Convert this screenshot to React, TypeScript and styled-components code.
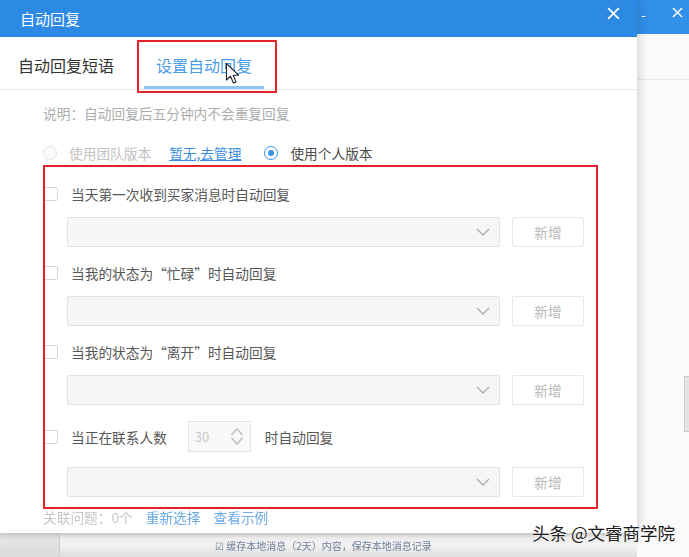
import React from "react";
import styled, { createGlobalStyle } from "styled-components";

const GlobalStyle = createGlobalStyle`
  html, body {
    margin: 0;
    padding: 0;
    background: #f2f2f2;
  }
  body {
    font-family: "Noto Sans CJK SC", "Noto Sans", sans-serif;
  }
  * {
    box-sizing: border-box;
  }
`;

const Screen = styled.div`
  position: relative;
  width: 689px;
  height: 557px;
  overflow: hidden;
  display: grid;
  grid-template-columns: 637px 1fr;
  grid-template-rows: 533px 1fr;
`;

const Dialog = styled.div`
  grid-column: 1;
  grid-row: 1;
  position: relative;
  z-index: 1;
  display: flex;
  flex-direction: column;
  background: #fff;
  box-shadow: 3px 0 9px rgba(0, 0, 0, 0.14);
`;

const TitleBar = styled.div`
  height: 37px;
  flex-shrink: 0;
  display: flex;
  align-items: center;
  justify-content: space-between;
  padding: 0 17px 0 20px;
  background: #2c8ae5;
`;

const Title = styled.div`
  color: #fff;
  font-size: 15px;
  line-height: 20px;
`;

const IconButton = styled.div`
  display: flex;
  align-items: center;
  justify-content: center;
  width: 14px;
  height: 14px;
  margin-top: -10px;
`;

const TabBar = styled.div`
  height: 53px;
  flex-shrink: 0;
  display: flex;
  gap: 20px;
  padding-left: 8px;
  border-bottom: 1px solid #ebebeb;
`;

const Tab = styled.div<{ $active?: boolean; $marked?: boolean }>`
  position: relative;
  display: flex;
  align-items: center;
  padding: 6px ${(p) => (p.$active ? 12 : 10)}px 0;
  font-size: 16px;
  color: ${(p) => (p.$active ? "#4a9de8" : "#333")};
  border-bottom: 3px solid ${(p) => (p.$active ? "#94c4ef" : "transparent")};

  &::after {
    content: "";
    display: ${(p) => (p.$marked ? "block" : "none")};
    position: absolute;
    top: 3px;
    left: -7px;
    right: -13px;
    bottom: -7px;
    border: 2px solid #e2242a;
  }
`;

const Cursor = styled.svg`
  position: absolute;
  left: 81px;
  top: 25px;
  z-index: 2;
`;

const Body = styled.div`
  flex: 1;
  display: flex;
  flex-direction: column;
  padding: 13px 0 0 43px;
`;

const Desc = styled.div`
  font-size: 13.7px;
  line-height: 20px;
  color: #acacac;
`;

const RadioRow = styled.div`
  margin-top: 20px;
  height: 20px;
  display: flex;
  align-items: center;
  font-size: 13.7px;
`;

const Radio = styled.span<{ $checked?: boolean; $gap?: number }>`
  width: 14px;
  height: 14px;
  margin-left: ${(p) => p.$gap ?? 0}px;
  border-radius: 50%;
  border: 1px solid ${(p) => (p.$checked ? "#3b93e4" : "#e2e2e2")};
  background: ${(p) => (p.$checked ? "#fff" : "#fbfbfb")};
  display: flex;
  align-items: center;
  justify-content: center;

  &::after {
    content: "";
    display: ${(p) => (p.$checked ? "block" : "none")};
    width: 6px;
    height: 6px;
    border-radius: 50%;
    background: #3b93e4;
  }
`;

const RadioText = styled.span<{ $disabled?: boolean }>`
  margin-left: 12px;
  color: ${(p) => (p.$disabled ? "#c2c2c2" : "#4c4c4c")};
`;

const Link = styled.span<{ $gap?: number; $underline?: boolean }>`
  margin-left: ${(p) => p.$gap ?? 0}px;
  color: #3b8ddf;
  text-decoration: ${(p) => (p.$underline ? "underline" : "none")};
`;

const RuleList = styled.div`
  position: relative;
  margin-top: 21px;
  margin-right: 39px;
  display: flex;
  flex-direction: column;
  gap: 16px;

  &::after {
    content: "";
    position: absolute;
    top: -19px;
    left: 0;
    right: 0;
    bottom: -12px;
    border: 2px solid #e2242a;
    pointer-events: none;
  }
`;

const Rule = styled.div`
  display: flex;
  flex-direction: column;
`;

const LabelRow = styled.div`
  min-height: 20px;
  display: flex;
  align-items: center;
  font-size: 13.7px;
  color: #575757;
`;

const Checkbox = styled.span`
  width: 14px;
  height: 14px;
  margin-left: 1px;
  margin-right: 13px;
  border: 1px solid #d6d6d6;
  border-radius: 2px;
  background: #fff;
  flex-shrink: 0;
`;

const Spinner = styled.div`
  width: 63px;
  height: 31px;
  margin: 0 14px 0 21px;
  display: flex;
  align-items: center;
  justify-content: space-between;
  padding: 0 6px 0 6px;
  border: 1px solid #e4e4e4;
  background: #f9f9f9;
  color: #c9c9c9;
  font-size: 13px;
`;

const FieldRow = styled.div<{ $top?: number }>`
  margin-top: ${(p) => p.$top ?? 13}px;
  padding-left: 24px;
  display: flex;
  gap: 12px;
`;

const Select = styled.div`
  width: 433px;
  height: 30px;
  display: flex;
  align-items: center;
  justify-content: flex-end;
  padding-right: 9px;
  background: #f6f6f6;
  border: 1px solid #e2e2e2;
  border-radius: 2px;
`;

const AddButton = styled.div`
  width: 72px;
  height: 30px;
  display: flex;
  align-items: center;
  justify-content: center;
  border: 1px solid #e8e8e8;
  border-radius: 2px;
  background: #fff;
  color: #b9b9b9;
  font-size: 13.7px;
`;

const Footer = styled.div`
  margin-top: 10px;
  height: 20px;
  display: flex;
  align-items: center;
  font-size: 13.7px;
  color: #b4b4b4;
  opacity: 0.75;
`;

const BottomStrip = styled.div`
  grid-column: 1;
  grid-row: 2;
  display: flex;
  background: linear-gradient(#d6d6d6, #efefef 5px, #f3f3f3 12px, #dedede);
`;

const StripBlock = styled.div`
  width: 60px;
  background: linear-gradient(#d2d2d2, #e4e4e4 6px, #dcdcdc);
  border-right: 1px solid #cfcfcf;
`;

const StripText = styled.div`
  margin-left: 155px;
  margin-top: 5px;
  font-size: 10px;
  color: #6e7f98;
  filter: blur(0.5px);
  white-space: nowrap;
`;

const RightPane = styled.div`
  grid-column: 2;
  grid-row: 1 / span 2;
  display: flex;
  flex-direction: column;
  background: #fafafa;
`;

const PaneHeader = styled.div`
  height: 34px;
  display: flex;
  align-items: flex-start;
  gap: 26px;
  padding: 7px 0 0 4px;
  background: #3190ea;
  color: #fff;
`;

const Dash = styled.span`
  font-size: 14px;
  line-height: 14px;
`;

const PaneBand = styled.div`
  height: 46px;
  border-bottom: 1px solid #e8e8e8;
`;

const PaneBody = styled.div`
  flex: 1;
  display: flex;
  justify-content: flex-end;
`;

const ScrollThumb = styled.div`
  width: 5px;
  height: 56px;
  margin-top: 296px;
  background: #e4e4e4;
  border: 1px solid #cdcdcd;
  border-right: none;
`;

const Watermark = styled.div`
  position: absolute;
  right: 14px;
  bottom: 13px;
  z-index: 3;
  font-size: 17.5px;
  line-height: 22px;
  color: #1c1c1c;
  text-shadow: 0 0 2px #fff, 0 0 3px #fff;
`;

const Chevron = () => (
	<svg width="14" height="8" viewBox="0 0 14 8">
		<path d="M1 1 L7 7 L13 1" fill="none" stroke="#aaa" strokeWidth="1.3" />
	</svg>
);

const Close = ({ size = 12 }: { size?: number }) => (
	<svg width={size} height={size} viewBox="0 0 12 12">
		<path d="M1 1 L11 11 M11 1 L1 11" stroke="#fff" strokeWidth="1.6" />
	</svg>
);

const rules = [
	"当天第一次收到买家消息时自动回复",
	"当我的状态为“忙碌”时自动回复",
	"当我的状态为“离开”时自动回复",
];

export default function App() {
	return (
		<Screen>
			<GlobalStyle />
			<Dialog>
				<TitleBar>
					<Title>自动回复</Title>
					<IconButton>
						<Close size={13} />
					</IconButton>
				</TitleBar>
				<TabBar>
					<Tab>自动回复短语</Tab>
					<Tab $active $marked>
						设置自动回复
						<Cursor width="16" height="24" viewBox="0 0 16 24">
							<path
								d="M1.5 1.5 L1.5 18 L5.5 14.2 L8.4 21 L11 19.9 L8.2 13.2 L13.5 13.2 Z"
								fill="#fff"
								stroke="#222"
								strokeWidth="1.1"
								strokeLinejoin="round"
							/>
						</Cursor>
					</Tab>
				</TabBar>
				<Body>
					<Desc>说明：自动回复后五分钟内不会重复回复</Desc>
					<RadioRow>
						<Radio />
						<RadioText $disabled>使用团队版本</RadioText>
						<Link $gap={18} $underline>
							暂无,去管理
						</Link>
						<Radio $checked $gap={23} />
						<RadioText>使用个人版本</RadioText>
					</RadioRow>
					<RuleList>
						{rules.map((text) => (
							<Rule key={text}>
								<LabelRow>
									<Checkbox />
									{text}
								</LabelRow>
								<FieldRow>
									<Select>
										<Chevron />
									</Select>
									<AddButton>新增</AddButton>
								</FieldRow>
							</Rule>
						))}
						<Rule>
							<LabelRow>
								<Checkbox />
								当正在联系人数
								<Spinner>
									30
									<svg width="14" height="19" viewBox="0 0 14 19">
										<path
											d="M1.5 8 L7 2 L12.5 8 M1.5 11 L7 17 L12.5 11"
											fill="none"
											stroke="#bdbdbd"
											strokeWidth="1.4"
										/>
									</svg>
								</Spinner>
								时自动回复
							</LabelRow>
							<FieldRow $top={15}>
								<Select>
									<Chevron />
								</Select>
								<AddButton>新增</AddButton>
							</FieldRow>
						</Rule>
					</RuleList>
					<Footer>
						关联问题：0个
						<Link $gap={13}>重新选择</Link>
						<Link $gap={13}>查看示例</Link>
					</Footer>
				</Body>
			</Dialog>
			<BottomStrip>
				<StripBlock />
				<StripText>☑ 缓存本地消息（2天）内容，保存本地消息记录</StripText>
			</BottomStrip>
			<RightPane>
				<PaneHeader>
					<Dash>-</Dash>
					<Close size={11} />
				</PaneHeader>
				<PaneBand />
				<PaneBody>
					<ScrollThumb />
				</PaneBody>
			</RightPane>
			<Watermark>头条 @文睿商学院</Watermark>
		</Screen>
	);
}
